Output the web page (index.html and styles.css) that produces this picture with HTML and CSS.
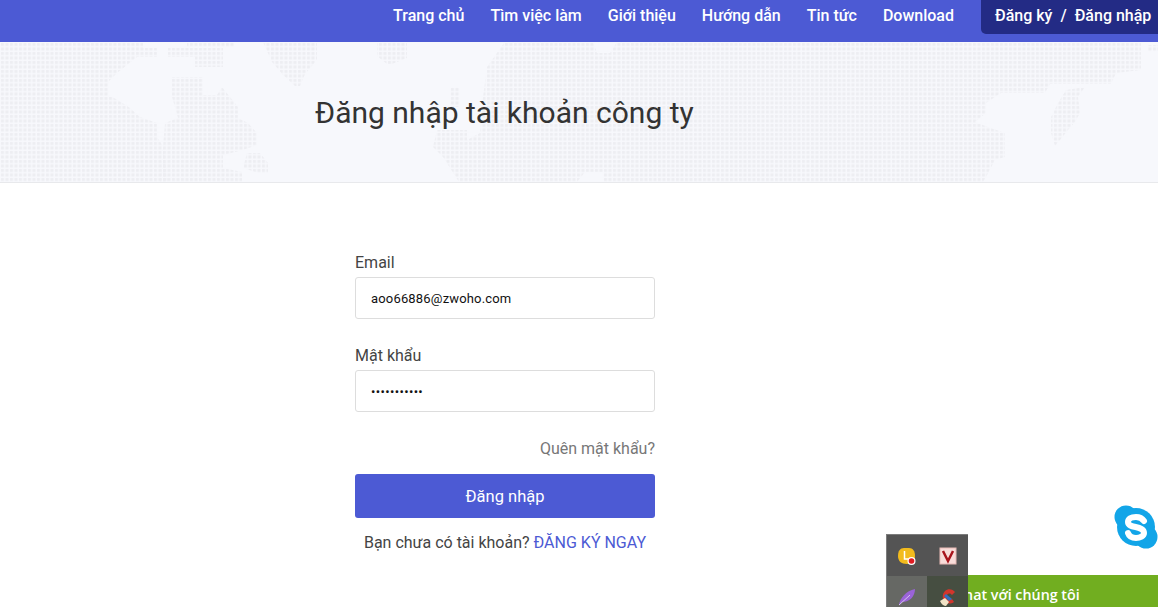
FILE: index.html
```html
<!DOCTYPE html>
<html>
<head>
  <meta charset="UTF-8">
  <title>Đăng nhập tài khoản công ty</title>
  <link rel="stylesheet" href="styles.css">
</head>
<body>

  <header class="topbar">
    <nav class="menu">
      <a href="#">Trang chủ</a>
      <a href="#">Tìm việc làm</a>
      <a href="#">Giới thiệu</a>
      <a href="#">Hướng dẫn</a>
      <a href="#">Tin tức</a>
      <a href="#">Download</a>
    </nav>
    <div class="account"><a href="#">Đăng ký</a><span>/</span><a href="#">Đăng nhập</a></div>
  </header>

  <section class="banner">
    <svg class="map" width="1158" height="140" viewBox="0 0 1158 140">
      <defs>
        <pattern id="dots" width="4.5" height="4.5" patternUnits="userSpaceOnUse">
          <rect x="1" y="1" width="3" height="3" fill="#edeef2"/>
        </pattern>
      </defs>
      <g fill="url(#dots)">
        <!-- left -->
        <path d="M0 0H143V15H137L127 23L117 31L108 40V53L118 58L130 66L140 75L157 81V95L163 104L168 140H0Z"/>
        <path d="M172 35H203V53H217L222 45L230 55L238 65V76L248 81L257 91V103L243 108L223 113V126L242 130V140H160L165 81L178 76L172 55Z"/>
        <path d="M247 111H260L268 121V131H258L243 126Z"/>
        <path d="M143 6H157V15H143Z"/>
        <path d="M168 6H223V25H195V15H168Z"/>
        <path d="M187 0H235V5H187Z"/>
        <path d="M263 0H317V18L305 32L300 44H295L283 33L272 20Z"/>
        <path d="M377 0H407V16L392 22H387L377 14Z"/>
        <!-- middle and right -->
        <path d="M513 0H1141V28L1116 31L1111 42H1050L1045 51H1001L986 61V71L975 80L988 85L1005 91V115L995 118L986 135L983 140H459L443 115L433 105L437 88H467V98L480 91L483 55L484 48L487 25L504 1Z"/>
        <path d="M450 45H460V65H450Z"/>
        <path d="M1085 45L1078 55L1080 71L1075 80L1068 88L1060 98L1055 104L1051 91V75L1058 61L1066 48Z"/>
        <path d="M1148 3H1158V10H1148Z"/>
      </g>
      <g fill="#f7f8fc">
        <path d="M593 0H617L610 11H597Z"/>
        <path d="M577 140H603V130H585Z"/>
      </g>
    </svg>
    <h1 class="page-title">Đăng nhập tài khoản công ty</h1>
  </section>

  <main class="login">
    <form class="login-form">
      <label class="field">
        <span class="field-label">Email</span>
        <input type="text" value="aoo66886@zwoho.com">
      </label>
      <label class="field">
        <span class="field-label">Mật khẩu</span>
        <input class="secret" type="password" value="aoo66886@zw">
      </label>
      <a class="forgot" href="#">Quên mật khẩu?</a>
      <button class="submit" type="button">Đăng nhập</button>
      <p class="signup">Bạn chưa có tài khoản? <a href="#">ĐĂNG KÝ NGAY</a></p>
    </form>
  </main>

  <a class="skype" href="#">
    <svg width="44" height="44" viewBox="0 0 44 44">
      <circle cx="12" cy="12" r="11.500" fill="#12a5e8"/>
      <circle cx="32" cy="32" r="11.500" fill="#12a5e8"/>
      <circle cx="22" cy="22" r="19" fill="#12a5e8"/>
      <path d="M30 16C28 13 25 12 22 12C17 12 14 14 14 17C14 24 30 20 30 28C30 31 26 33 22 33C18 33 15 31 14 28" fill="none" stroke="#fff" stroke-width="6" stroke-linecap="round"/>
    </svg>
  </a>

  <div class="chat">Chat với chúng tôi</div>

  <div class="tray">
    <div class="tray-cell">
      <svg width="22" height="22" viewBox="0 0 22 22">
        <path d="M8 3h5c4 0 6 3 6 8 0 5-3 8-8 8-6 0-9-3-9-8 0-5 2-8 6-8z" fill="#f2bb1d"/>
        <path d="M8.500 6v8h4" fill="none" stroke="#fff" stroke-width="1.500"/>
        <circle cx="15.500" cy="16" r="4" fill="#fff"/>
        <circle cx="15.500" cy="16" r="2.800" fill="#e01b22"/>
      </svg>
    </div>
    <div class="tray-cell">
      <svg width="18" height="18" viewBox="0 0 18 18">
        <rect x="1" y="1" width="16" height="16" fill="#f8dcd9" stroke="#e7b9b5"/>
        <path d="M4 4l5 10 5-10" fill="none" stroke="#a8141c" stroke-width="2.500"/>
      </svg>
    </div>
    <div class="tray-cell tray-cell-on">
      <svg width="20" height="20" viewBox="0 0 20 20">
        <path d="M2 18C3 11 9 4 18 2 18 9 13 15 5 15z" fill="#9a63d8"/>
        <path d="M2 18L13 8" stroke="#d9c3f2" stroke-width="1"/>
      </svg>
    </div>
    <div class="tray-cell tray-cell-dark">
      <svg width="20" height="20" viewBox="0 0 20 20">
        <path d="M17 5c-2-3-7-4-10-1-3 3-3 8 0 11 2 2 6 2 9 0l-2-3c-2 1-4 1-5 0-1-2-1-4 1-5 2-1 3 0 4 1z" fill="#d2352c"/>
        <path d="M8 7l6 5-3 2-5-5z" fill="#2f6fc4"/>
        <path d="M2 14l5-3 4 4-3 4c-2 0-5-2-6-5z" fill="#f1e3c6"/>
      </svg>
    </div>
  </div>

</body>
</html>
```

FILE: styles.css
```css
* {
  box-sizing: border-box;
}
html, body {
  height: 100%;
}
body {
  margin: 0;
  position: relative;
  overflow: hidden;
  font-family: Roboto, Arial, sans-serif;
  color: #444;
  background-color: #fff;
}
a {
  text-decoration: none;
}

.topbar {
  height: 42px;
  display: flex;
  justify-content: flex-end;
  align-items: flex-start;
  background-color: #4c5ad4;
}
.menu {
  display: flex;
  gap: 26px;
  height: 34px;
  align-items: center;
  padding-bottom: 4px;
  margin-right: 27px;
}
.menu a,
.account a,
.account span {
  color: #fff;
  font-size: 16px;
  font-weight: 500;
}
.account {
  width: 177px;
  height: 34px;
  padding: 0 0 4px 14px;
  display: flex;
  align-items: center;
  gap: 8px;
  white-space: nowrap;
  background-color: #232b85;
  border-bottom-left-radius: 5px;
}

.banner {
  position: relative;
  height: 141px;
  background-color: #f7f8fc;
  border-bottom: 1px solid #e8e9ec;
  overflow: hidden;
}
.map {
  position: absolute;
  left: 0;
  top: 0;
}
.page-title {
  position: relative;
  margin: 0;
  padding: 52px 0 0 315px;
  font-size: 30px;
  line-height: 38px;
  font-weight: 400;
  color: #333;
}

.login-form {
  width: 300px;
  margin: 68px 0 0 355px;
  display: flex;
  flex-direction: column;
}
.field {
  display: block;
  margin-bottom: 25px;
}
.field-label {
  display: block;
  font-size: 16px;
  line-height: 24px;
  margin-bottom: 2px;
}
.field input {
  display: block;
  width: 100%;
  height: 42px;
  padding: 0 15px;
  font-family: Roboto, Arial, sans-serif;
  font-size: 13px;
  letter-spacing: 0.17px;
  color: #111;
  border: 1px solid #ddd;
  border-radius: 3px;
  background-color: #fff;
}
.field input.secret {
  letter-spacing: 0.35px;
}
.forgot {
  align-self: flex-end;
  font-size: 16px;
  line-height: 24px;
  color: #777;
}
.submit {
  height: 44px;
  margin-top: 13px;
  font-family: Roboto, Arial, sans-serif;
  font-size: 16.5px;
  color: #fff;
  border: none;
  border-radius: 3px;
  background-color: #4c5ad4;
}
.signup {
  margin: 13px 0 0;
  text-align: center;
  font-size: 16px;
  line-height: 24px;
}
.signup a {
  color: #4c5ad4;
}

.skype {
  position: absolute;
  left: 1114px;
  top: 505px;
}
.chat {
  position: absolute;
  left: 940px;
  right: 0;
  top: 575px;
  height: 32px;
  padding-left: 15px;
  line-height: 40px;
  font-family: "Open Sans", sans-serif;
  font-size: 14.3px;
  font-weight: 600;
  color: #fff;
  background-color: #71ae20;
}
.tray {
  position: absolute;
  left: 886px;
  top: 534px;
  width: 82px;
  height: 73px;
  display: grid;
  grid-template-columns: 40px 41px;
  grid-auto-rows: 41px;
  background-color: #545454;
  border: 1px solid #7c7c7c;
  border-bottom: none;
  border-right: none;
}
.tray-cell {
  display: flex;
  align-items: center;
  justify-content: center;
}
.tray-cell-on {
  background-color: #666864;
}
.tray-cell-dark {
  background-color: #464e41;
}
```
